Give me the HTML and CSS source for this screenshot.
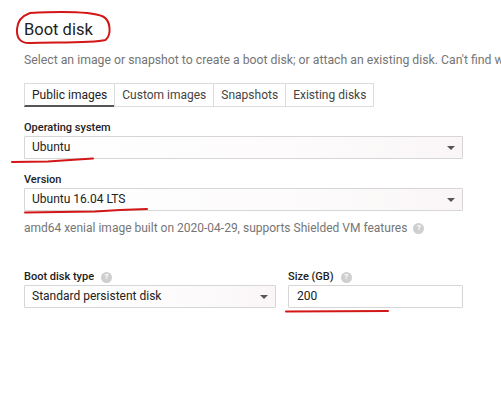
FILE: index.html
```html
<!DOCTYPE html>
<html>
<head>
<meta charset="utf-8">
<link rel="stylesheet" href="styles.css">
</head>
<body>
<div class="page">
  <h2 class="title">Boot disk</h2>
  <p class="desc">Select an image or snapshot to create a boot disk; or attach an existing disk. Can't find what you're looking for? Explore hundreds of VM solutions in Marketplace.</p>
  <div class="tabs">
    <div class="tab active">Public images</div>
    <div class="tab">Custom images</div>
    <div class="tab">Snapshots</div>
    <div class="tab">Existing disks</div>
  </div>

  <div class="field wide">
    <div class="label">Operating system</div>
    <div class="select"><span>Ubuntu</span><span class="arrow"></span></div>
  </div>

  <div class="field wide">
    <div class="label">Version</div>
    <div class="select"><span>Ubuntu 16.04 LTS</span><span class="arrow"></span></div>
  </div>
  <div class="hint">amd64 xenial image built on 2020-04-29, supports Shielded VM features <span class="help">?</span></div>

  <div class="row">
    <div class="field">
      <div class="label">Boot disk type <span class="help">?</span></div>
      <div class="select"><span>Standard persistent disk</span><span class="arrow"></span></div>
    </div>
    <div class="field">
      <div class="label">Size (GB) <span class="help">?</span></div>
      <div class="input">200</div>
    </div>
  </div>

  <svg class="marks" width="501" height="401" viewBox="0 0 501 401">
    <path d="M30 13 C60 11.5 92 12 103 16.5 C111 20.5 111.5 35 105.5 40 C92 43.5 52 42 30 43 C19 43.5 16.5 36.5 17 29 C17.5 21 22 16 29 13.5" />
    <path d="M12 162 L48 161.5 L70 160 L93 158.5" />
    <path d="M25 212.5 L95 211.5 L120 210 L147 209" />
    <path d="M286 311.5 L388 311" />
  </svg>
</div>
</body>
</html>
```

FILE: styles.css
```css
html, body {
  margin: 0;
  padding: 0;
  background: #fff;
}

.page {
  position: relative;
  width: 501px;
  height: 401px;
  overflow: hidden;
  padding-left: 24px;
  box-sizing: border-box;
  font-family: Roboto, "Liberation Sans", Arial, sans-serif;
  color: #212121;
}

.title {
  margin: 0;
  padding-top: 20px;
  font-size: 16.5px;
  font-weight: 400;
  line-height: 20px;
  color: #212121;
}

.desc {
  margin: 12px 0 0;
  font-size: 12.25px;
  line-height: 16px;
  color: #757575;
  white-space: nowrap;
}

.tabs {
  display: flex;
  margin-top: 15px;
}

.tab {
  font-size: 12px;
  line-height: 14px;
  padding: 4px 7px 4px;
  border: 1px solid #dcdcdc;
  color: #444;
  margin-left: -1px;
}

.tab:first-child {
  margin-left: 0;
}

.tab.active {
  color: #222;
  border-bottom: 2px solid #555;
  padding-bottom: 3px;
}

.field {
  display: flex;
  flex-direction: column;
}

.field.wide {
  width: 439px;
  margin-top: 14px;
}

.label {
  font-size: 11px;
  font-weight: 500;
  line-height: 14px;
  color: #222;
  margin-bottom: 1px;
  display: flex;
  align-items: center;
  gap: 7px;
}

.select, .input {
  box-sizing: border-box;
  height: 23px;
  border: 1px solid #d6d6d6;
  border-radius: 1px;
  font-size: 12px;
  line-height: 14px;
  padding: 3px 7px 4px;
  display: flex;
  justify-content: space-between;
  align-items: flex-start;
}

.select {
  background: linear-gradient(to right, #fff 0%, #fdfbfb 60%, #faf6f7 100%);
}

.input {
  background: #fff;
  padding-left: 8px;
}

.arrow {
  width: 0;
  height: 0;
  margin-top: 6px;
  margin-right: 0;
  border-left: 4px solid transparent;
  border-right: 4px solid transparent;
  border-top: 4px solid #555;
}

.hint {
  margin-top: 10px;
  font-size: 12px;
  line-height: 14px;
  color: #757575;
  display: flex;
  align-items: center;
  gap: 6px;
}

.help {
  display: inline-flex;
  align-items: center;
  justify-content: center;
  width: 11px;
  height: 11px;
  border-radius: 50%;
  background: #cfcfcf;
  color: #fff;
  font-size: 8px;
  font-weight: 700;
  line-height: 1;
}

.row {
  display: grid;
  grid-template-columns: 252px 175px;
  column-gap: 12px;
  margin-top: 35px;
}

.marks {
  position: absolute;
  left: 0;
  top: 0;
  pointer-events: none;
}

.marks path {
  fill: none;
  stroke: #d31616;
  stroke-width: 2;
  stroke-linecap: round;
  stroke-linejoin: round;
}
```
